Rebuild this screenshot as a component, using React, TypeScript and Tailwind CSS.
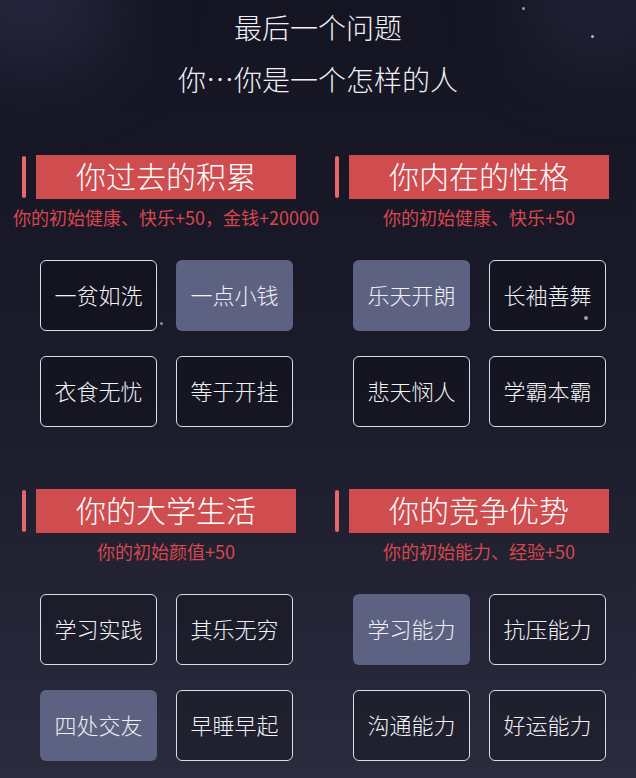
import React from "react";

type Section = {
  title: string;
  sub: string;
  options: string[];
  selected: number;
};

const sections: Section[] = [
  { title: "你过去的积累", sub: "你的初始健康、快乐+50，金钱+20000", options: ["一贫如洗", "一点小钱", "衣食无忧", "等于开挂"], selected: 1 },
  { title: "你内在的性格", sub: "你的初始健康、快乐+50", options: ["乐天开朗", "长袖善舞", "悲天悯人", "学霸本霸"], selected: 0 },
  { title: "你的大学生活", sub: "你的初始颜值+50", options: ["学习实践", "其乐无穷", "四处交友", "早睡早起"], selected: 2 },
  { title: "你的竞争优势", sub: "你的初始能力、经验+50", options: ["学习能力", "抗压能力", "沟通能力", "好运能力"], selected: 0 },
];

function Block({ s }: { s: Section }) {
  return (
    <div className="flex flex-col">
      <div className="flex items-center h-[44px]">
        <div className="w-[4px] h-[42px] rounded-full bg-[#e6686b]" />
        <div className="ml-[10px] w-[260px] h-[44px] pb-[4px] bg-[#cf4d4f] flex items-center justify-center text-white text-[30px] leading-none font-light">
          {s.title}
        </div>
      </div>
      <div className="ml-[14px] w-[260px] flex justify-center mt-[6px] h-[24px]">
        <span className="whitespace-nowrap text-[18px] leading-[24px] text-[#d9474c]">{s.sub}</span>
      </div>
      <div className="ml-[18px] mt-[31px] grid grid-cols-[117px_117px] gap-x-[19px] gap-y-[25px]">
        {s.options.map((o, i) => (
          <div
            key={o}
            className={
              i === s.selected
                ? "h-[71px] pb-[3px] rounded-[6px] bg-[#5d6282] flex items-center justify-center text-[22px] font-light text-[#eef0f6]"
                : "h-[71px] pb-[3px] rounded-[6px] border-[1.5px] border-[#dcdce4] bg-black/20 flex items-center justify-center text-[22px] font-light text-[#f2f2f6]"
            }
          >
            {o}
          </div>
        ))}
      </div>
    </div>
  );
}

export default function App() {
  return (
    <div
      className="relative w-[636px] h-[778px] overflow-hidden bg-gradient-to-b from-[#141423] via-[#1b1b2b] to-[#2a2b3d]"
      style={{ fontFamily: '"Noto Sans CJK SC", "Noto Sans", sans-serif' }}
    >
      <div className="absolute -left-[60px] -top-[60px] w-[180px] h-[130px] rounded-full bg-[#2e2d48] opacity-70 blur-2xl" />
      <div className="absolute -right-[40px] -top-[50px] w-[150px] h-[110px] rounded-full bg-[#2a2a42] opacity-70 blur-2xl" />
      <div className="absolute left-[522px] top-[7px] w-[3px] h-[3px] rounded-full bg-[#9a9ab0]" />
      <div className="absolute left-[591px] top-[35px] w-[3px] h-[3px] rounded-full bg-[#b8b8c8]" />
      <div className="absolute left-[160px] top-[322px] w-[3px] h-[3px] rounded-full bg-[#8a8aa0]" />
      <div className="absolute left-[584px] top-[316px] w-[4px] h-[4px] rounded-full bg-[#c8c8d4]" />

      <div className="relative flex flex-col">
        <div className="pt-[1px] flex flex-col items-center text-[#f0f0f4] text-[28px] leading-[52px] font-light">
          <div>最后一个问题</div>
          <div>你…你是一个怎样的人</div>
        </div>
        <div className="mt-[50px] pl-[22px] grid grid-cols-[313px_301px] gap-y-[62px]">
          {sections.map((s) => (
            <Block key={s.title} s={s} />
          ))}
        </div>
      </div>
    </div>
  );
}
